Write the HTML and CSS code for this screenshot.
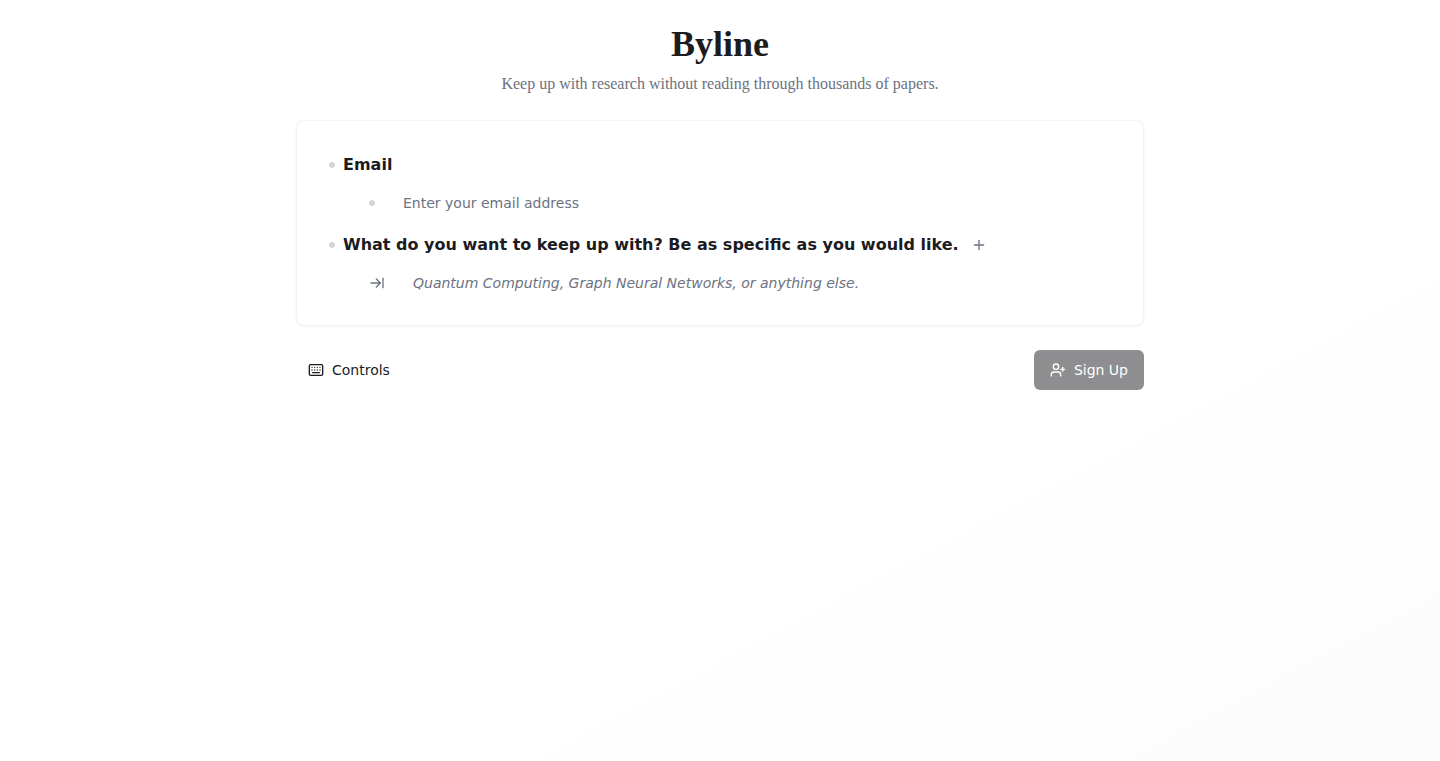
FILE: index.html
```html
<!DOCTYPE html>
<html lang="en">
<head>
    <meta charset="UTF-8">
    <meta name="viewport" content="width=device-width, initial-scale=1.0">
    <title>Byline</title>
    <link rel="stylesheet" href="styles.css">
</head>
<body>
    <main class="page">
        <header class="intro">
            <h1 class="title">Byline</h1>
            <p class="tagline">Keep up with research without reading through thousands of papers.</p>
        </header>

        <section class="card">
            <div class="row">
                <span class="dot"></span>
                <span class="label">Email</span>
            </div>
            <div class="row row-sub">
                <span class="dot"></span>
                <span class="hint">Enter your email address</span>
            </div>
            <div class="row row-next">
                <span class="dot"></span>
                <span class="label">What do you want to keep up with? Be as specific as you would like.</span>
                <svg class="plus" width="16" height="16" viewBox="0 0 24 24" fill="none" stroke="currentColor" stroke-width="2" stroke-linecap="round" stroke-linejoin="round"><path d="M5 12h14"/><path d="M12 5v14"/></svg>
            </div>
            <div class="row row-sub">
                <svg class="tab" width="16" height="16" viewBox="0 0 24 24" fill="none" stroke="currentColor" stroke-width="2" stroke-linecap="round" stroke-linejoin="round"><path d="M17 12H3"/><path d="m11 18 6-6-6-6"/><path d="M21 5v14"/></svg>
                <span class="hint hint-topic">Quantum Computing, Graph Neural Networks, or anything else.</span>
            </div>
        </section>

        <footer class="actions">
            <button class="controls" type="button">
                <svg width="16" height="16" viewBox="0 0 24 24" fill="none" stroke="currentColor" stroke-width="2" stroke-linecap="round" stroke-linejoin="round"><rect x="2" y="4" width="20" height="16" rx="2"/><path d="M6 8h.01"/><path d="M10 8h.01"/><path d="M14 8h.01"/><path d="M18 8h.01"/><path d="M6 12h.01"/><path d="M10 12h.01"/><path d="M14 12h.01"/><path d="M18 12h.01"/><path d="M7 16h10"/></svg>
                Controls
            </button>
            <button class="signup" type="button">
                <svg width="16" height="16" viewBox="0 0 24 24" fill="none" stroke="currentColor" stroke-width="2" stroke-linecap="round" stroke-linejoin="round"><path d="M16 21v-2a4 4 0 0 0-4-4H6a4 4 0 0 0-4 4v2"/><circle cx="9" cy="7" r="4"/><path d="M19 8v6"/><path d="M22 11h-6"/></svg>
                Sign Up
            </button>
        </footer>
    </main>
</body>
</html>
```

FILE: styles.css
```css
* {
    box-sizing: border-box;
}

html, body {
    height: 100%;
}

body {
    margin: 0;
    font-family: "DejaVu Sans", sans-serif;
    color: #1c1c1f;
    background: linear-gradient(to bottom right, #fff 65%, #fcfcfc);
}

.page {
    width: 848px;
    margin: 0 auto;
    padding-top: 24px;
}

/* heading */
.intro {
    text-align: center;
    margin-bottom: 24px;
}

.title {
    margin: 0;
    font-family: "Liberation Serif", serif;
    font-size: 36px;
    line-height: 40px;
    font-weight: 700;
}

.tagline {
    margin: 8px 0 0;
    font-family: "Liberation Serif", serif;
    font-size: 16px;
    line-height: 24px;
    color: #6b7280;
}

/* form card */
.card {
    height: 206px;
    padding: 32px;
    background: #fff;
    border: 1px solid #f3f4f6;
    border-radius: 8px;
    box-shadow: 0 1px 3px rgba(0, 0, 0, 0.05);
}

.row {
    display: flex;
    align-items: center;
    height: 24px;
}

.row-sub {
    padding-left: 40px;
    margin-top: 14px;
}

.row-next {
    margin-top: 18px;
}

.dot {
    width: 6px;
    height: 6px;
    border-radius: 50%;
    background: #d1d5db;
}

.label {
    margin-left: 8px;
    margin-bottom: 2px;
    font-size: 16px;
    font-weight: 700;
    white-space: nowrap;
}

.hint {
    margin-left: 28px;
    font-size: 14px;
    color: #6b7280;
}

.hint-topic {
    font-style: italic;
}

.plus {
    margin-left: 12px;
    color: #6b7280;
}

.tab {
    color: #6b7280;
}

/* bottom actions */
.actions {
    display: flex;
    justify-content: space-between;
    align-items: center;
    margin-top: 24px;
}

.controls, .signup {
    display: flex;
    align-items: center;
    gap: 8px;
    height: 40px;
    border: 0;
    border-radius: 6px;
    font-family: inherit;
    font-size: 14px;
}

.controls {
    padding: 0 12px;
    background: transparent;
    color: #1c1c1f;
}

.signup {
    padding: 0 16px;
    background: #8e8e90;
    color: #fff;
}
```
